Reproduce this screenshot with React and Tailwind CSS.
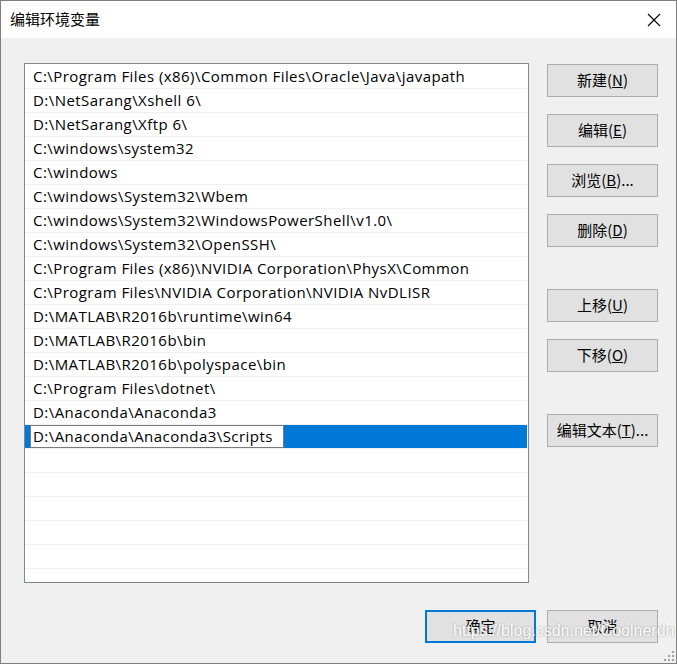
const paths = [
  'C:\\Program Files (x86)\\Common Files\\Oracle\\Java\\javapath',
  'D:\\NetSarang\\Xshell 6\\',
  'D:\\NetSarang\\Xftp 6\\',
  'C:\\windows\\system32',
  'C:\\windows',
  'C:\\windows\\System32\\Wbem',
  'C:\\windows\\System32\\WindowsPowerShell\\v1.0\\',
  'C:\\windows\\System32\\OpenSSH\\',
  'C:\\Program Files (x86)\\NVIDIA Corporation\\PhysX\\Common',
  'C:\\Program Files\\NVIDIA Corporation\\NVIDIA NvDLISR',
  'D:\\MATLAB\\R2016b\\runtime\\win64',
  'D:\\MATLAB\\R2016b\\bin',
  'D:\\MATLAB\\R2016b\\polyspace\\bin',
  'C:\\Program Files\\dotnet\\',
  'D:\\Anaconda\\Anaconda3',
]

function Btn({ label, k, tail = '', className = '' }) {
  return (
    <button
      type="button"
      className={`w-[111px] h-[33px] bg-[#e1e1e1] border border-[#adadad] text-[15px] text-black flex items-center justify-center ${className}`}
    >
      {label}(<u>{k}</u>){tail}
    </button>
  )
}

export default function App() {
  return (
    <div className="relative w-[677px] h-[664px] bg-[#f0f0f0] border border-[#7f7f7f] overflow-hidden font-['Open_Sans','Noto_Sans_CJK_SC',sans-serif] text-black">
      <div className="h-[37px] bg-white flex items-center justify-between pl-[9px] pr-[15px]">
        <span className="text-[15px] font-['Noto_Sans_CJK_SC',sans-serif]">编辑环境变量</span>
        <svg width="14" height="14" viewBox="0 0 14 14" stroke="#000" strokeWidth="1.1">
          <path d="M1 1L13 13M13 1L1 13" />
        </svg>
      </div>

      <div className="flex pl-[23px] pt-[25px]">
        <div className="w-[505px] h-[520px] bg-white border border-[#828790] pt-[1px] pr-[1px] flex flex-col overflow-hidden">
          {paths.map((p) => (
            <div key={p} className="h-[24px] shrink-0 border-b border-[#f0f0f0] pl-[8px] flex items-center text-[15px] tracking-[0.45px] whitespace-nowrap">
              {p}
            </div>
          ))}
          <div className="h-[24px] shrink-0 border-b border-[#f0f0f0] pl-[5px] flex bg-[#0078d7]">
            <div className="w-[254px] h-full bg-white border border-[#7a7a7a] pl-[2px] flex items-center text-[15px] tracking-[0.45px] whitespace-nowrap">
              D:\Anaconda\Anaconda3\Scripts
            </div>
          </div>
          {[0, 1, 2, 3, 4, 5].map((i) => (
            <div key={i} className="h-[24px] shrink-0 border-b border-[#f0f0f0]" />
          ))}
        </div>

        <div className="flex flex-col ml-[18px] pt-[1px] font-['Noto_Sans_CJK_SC',sans-serif]">
          <Btn label="新建" k="N" />
          <Btn label="编辑" k="E" className="mt-[17px]" />
          <Btn label="浏览" k="B" tail="..." className="mt-[17px]" />
          <Btn label="删除" k="D" className="mt-[17px]" />
          <Btn label="上移" k="U" className="mt-[42px]" />
          <Btn label="下移" k="O" className="mt-[17px]" />
          <Btn label="编辑文本" k="T" tail="..." className="mt-[42px]" />
        </div>
      </div>

      <div className="flex justify-end gap-[11px] pr-[18px] mt-[27px] font-['Noto_Sans_CJK_SC',sans-serif]">
        <button type="button" className="w-[111px] h-[33px] bg-[#e1e1e1] border-2 border-[#0078d7] text-[15px]">确定</button>
        <button type="button" className="w-[111px] h-[33px] bg-[#e1e1e1] border border-[#adadad] text-[15px]">取消</button>
      </div>

      <span className="absolute left-[452px] top-[620px] text-[16px] leading-[20px] text-white font-['Liberation_Sans',sans-serif] [text-shadow:0_0_2px_#8a8a8a] whitespace-nowrap">
        https://blog.csdn.net/Coolnerdn
      </span>
      <svg className="absolute right-[2px] bottom-[2px]" width="10" height="10" viewBox="0 0 10 10" fill="#a0a0a0">
        <rect x="8" y="0" width="2" height="2" />
        <rect x="4" y="4" width="2" height="2" />
        <rect x="8" y="4" width="2" height="2" />
        <rect x="0" y="8" width="2" height="2" />
        <rect x="4" y="8" width="2" height="2" />
        <rect x="8" y="8" width="2" height="2" />
      </svg>
    </div>
  )
}
